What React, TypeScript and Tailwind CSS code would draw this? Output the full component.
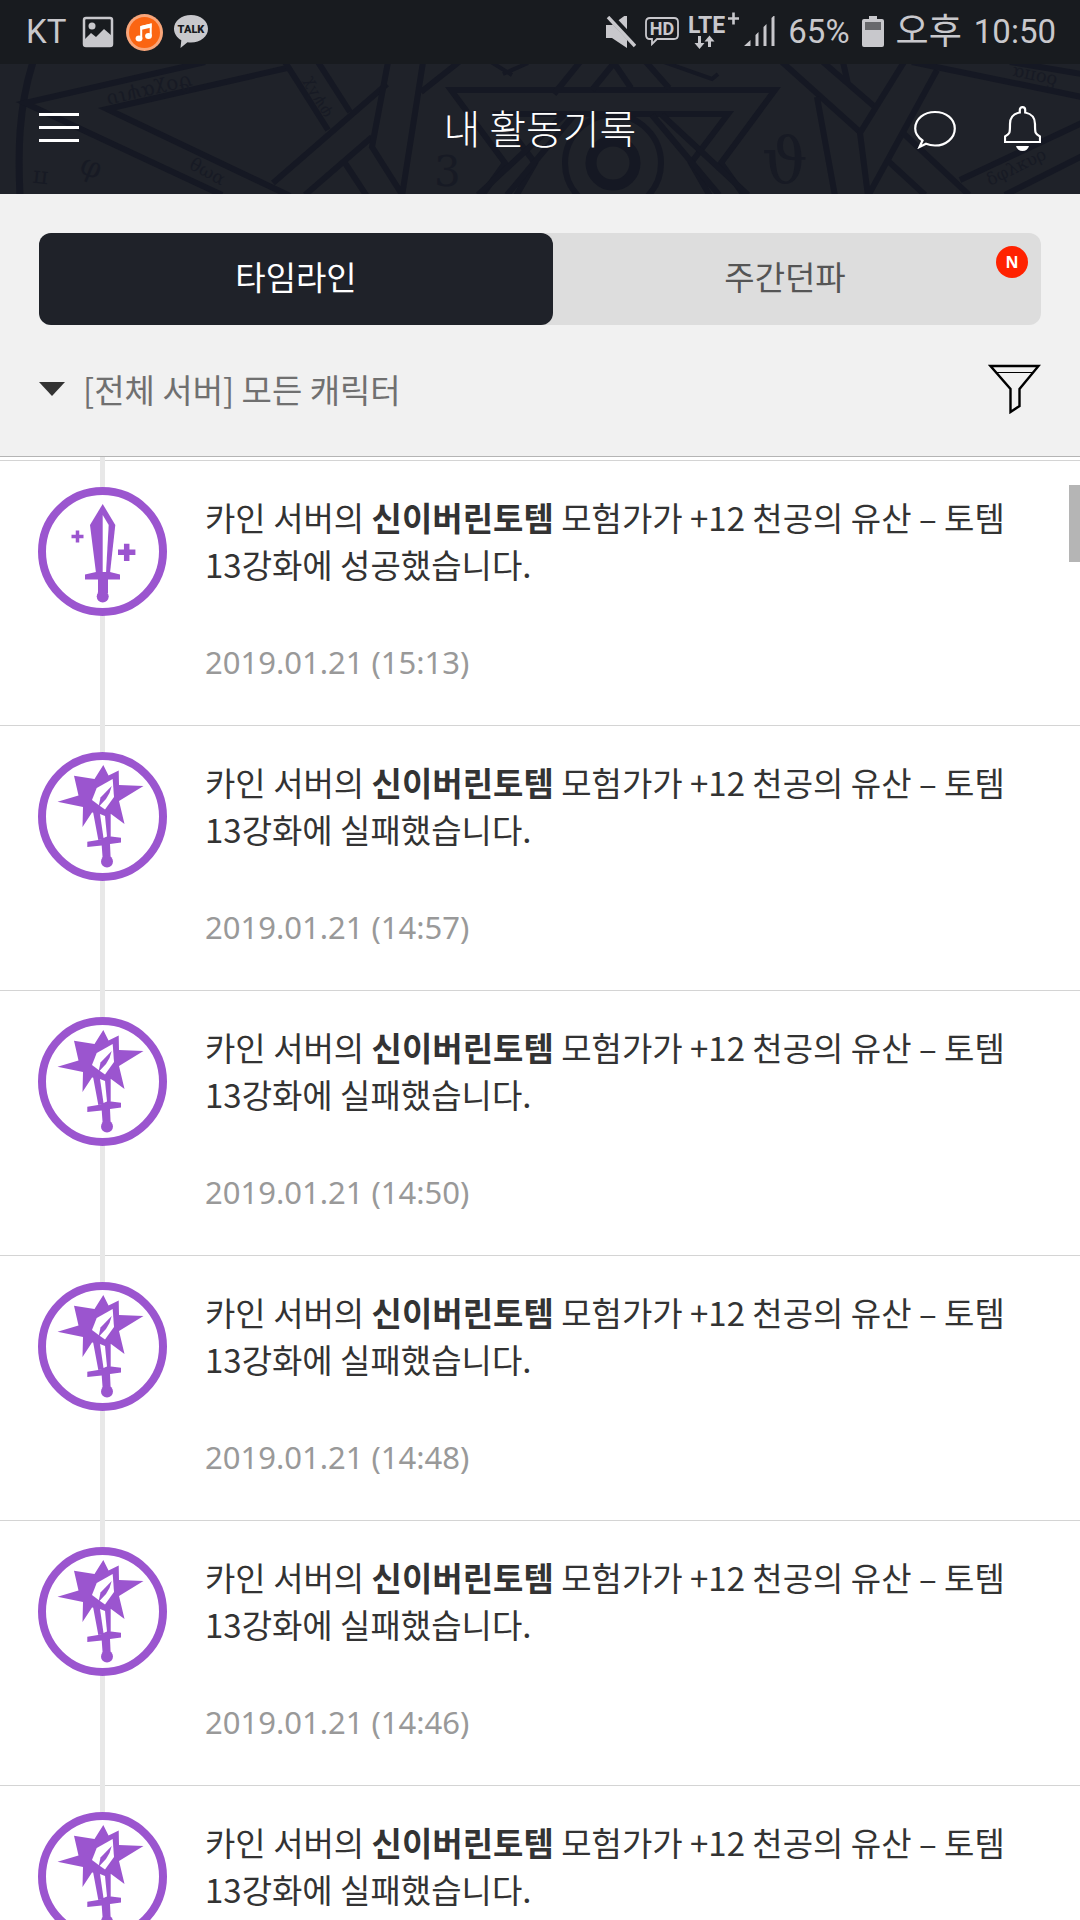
import { useState } from "react";

interface Activity {
  server: string;
  character: string;
  item: string;
  result: string;
  success: boolean;
  date: string;
}

const BASE = {
  server: "카인",
  character: "신이버린토템",
  item: "+12 천공의 유산 – 토템",
};

const ACTIVITIES: Activity[] = [
  { ...BASE, result: "13강화에 성공했습니다.", success: true, date: "2019.01.21 (15:13)" },
  { ...BASE, result: "13강화에 실패했습니다.", success: false, date: "2019.01.21 (14:57)" },
  { ...BASE, result: "13강화에 실패했습니다.", success: false, date: "2019.01.21 (14:50)" },
  { ...BASE, result: "13강화에 실패했습니다.", success: false, date: "2019.01.21 (14:48)" },
  { ...BASE, result: "13강화에 실패했습니다.", success: false, date: "2019.01.21 (14:46)" },
  { ...BASE, result: "13강화에 실패했습니다.", success: false, date: "2019.01.21 (14:44)" },
];

function StatusBar() {
  return (
    <div className="flex h-16 shrink-0 items-center justify-between bg-[#181b1f] pr-6 pl-[26px] font-['Roboto','Noto_Sans_CJK_KR',sans-serif] text-[#c8c8cc]">
      <div className="flex items-center">
        <span className="text-[33px]">KT</span>
        <svg className="ml-4 h-8 w-8" viewBox="0 0 32 32" fill="none">
          <rect x="2" y="2" width="28" height="28" rx="2" stroke="currentColor" strokeWidth="2.5" />
          <circle cx="10" cy="10" r="3.5" fill="currentColor" />
          <path d="M2 24 L9 17 L14 21 L22 13 L30 20 V30 H2 Z" fill="currentColor" />
        </svg>
        <svg className="ml-3 h-[37px] w-[37px]" viewBox="0 0 37 37">
          <circle cx="18.5" cy="18.5" r="18.5" fill="#f9a67a" />
          <circle cx="18.5" cy="18.5" r="15.5" fill="#fb6512" />
          <ellipse cx="13" cy="24.5" rx="3.4" ry="2.9" fill="#fff" />
          <ellipse cx="22.5" cy="22" rx="3.4" ry="2.9" fill="#fff" />
          <path d="M15.2 24.5 V13 L24.7 10.5 V22" fill="none" stroke="#fff" strokeWidth="2" />
          <path d="M14.5 12 L25.5 9.5 V13.5 L14.5 16 Z" fill="#fff" />
        </svg>
        <svg className="ml-[10px] h-9 w-9" viewBox="0 0 36 36">
          <path
            d="M18 1 C27.5 1 35 6.8 35 14.8 C35 22.8 27.5 28.5 18 28.5 C16.8 28.5 15.6 28.4 14.5 28.2 L7.5 34 L8.3 26.2 C3.8 23.7 1 19.6 1 14.8 C1 6.8 8.5 1 18 1 Z"
            fill="currentColor"
          />
          <text x="18" y="19" textAnchor="middle" fontSize="11" fontWeight="900" fill="#181b1f">
            TALK
          </text>
        </svg>
      </div>
      <div className="flex items-center">
        <svg className="h-8 w-[30px]" viewBox="0 0 30 32" fill="currentColor">
          <path d="M0 9 H6 L21 -2 V32 L6 22 H0 Z" />
          <path d="M1 -3 L31 29" stroke="#181b1f" strokeWidth="7" />
          <path d="M2 1 L29 30" stroke="currentColor" strokeWidth="3.5" />
        </svg>
        <svg className="ml-2 h-8 w-9" viewBox="0 0 36 32" fill="none" stroke="currentColor">
          <path
            d="M6 2 H30 Q34 2 34 6 V19 Q34 23 30 23 H13 L8 28 V23 H6 Q2 23 2 19 V6 Q2 2 6 2 Z"
            strokeWidth="1.8"
          />
          <text x="18" y="19" textAnchor="middle" fontSize="18" fontWeight="700" fill="currentColor" stroke="none">
            HD
          </text>
        </svg>
        <svg className="ml-2 h-10 w-[52px]" viewBox="0 0 52 40" fill="currentColor">
          <text x="0" y="21" fontSize="23" fontWeight="700">
            LTE
          </text>
          <path d="M40 6.5 H51 M45.5 0.5 V12.5" stroke="currentColor" strokeWidth="2.6" />
          <path d="M10 24 H13 V31 H16.5 L11.5 37 L6.5 31 H10 Z" />
          <path d="M20 35 V29.5 H16.5 L21.5 23.5 L26.5 29.5 H23 V35 Z" />
        </svg>
        <svg className="ml-1 h-8 w-8" viewBox="0 0 32 32" fill="currentColor">
          <path d="M0 30 L6.5 24 V30 Z M11.5 19 L14.5 16 V30 H11.5 Z M19.5 11 L22.5 8 V30 H19.5 Z M27.5 2 L30.5 -1 V30 H27.5 Z" />
        </svg>
        <span className="ml-3 text-[33px]">65%</span>
        <svg className="ml-3 h-8 w-[22px]" viewBox="0 0 22 32">
          <path d="M7 0 H15 V3 H20 Q22 3 22 5 V29 Q22 31 20 31 H2 Q0 31 0 29 V5 Q0 3 2 3 H7 Z" fill="currentColor" />
          <rect x="3" y="6" width="16" height="8" fill="#68696c" />
        </svg>
        <span className="ml-3 text-[36px] leading-10">오후</span>
        <span className="ml-3 text-[33px]">10:50</span>
      </div>
    </div>
  );
}

// magic circle ornament behind the app bar
function HeaderPattern() {
  return (
    <svg
      className="absolute inset-0 h-full w-full"
      viewBox="0 0 1080 130"
      preserveAspectRatio="xMidYMid slice"
      fill="none"
      aria-hidden="true"
    >
      <g stroke="#151823" strokeWidth="6">
        <path d="M33 -2 C18 45 18 90 20 132" strokeWidth="7" />
        <path d="M205 -2 L25 39 L222 131" />
        <path d="M287 4 L107 45 L290 132" />
        <path d="M285 -2 L328 66 M318 -2 L350 48" />
        <path d="M387 20 L273 119 M372 73 L305 131 M345 99 L368 134" />
        <path d="M388 -2 L372 83 L403 132 M423 -2 L402 132 M421 28 L459 -2" />
        <path d="M491 -2 L512 11 M503 10 L528 -1" strokeWidth="4" />
        <path d="M743 130 L721 99 L775 26 H451 L505 99 L483 130" />
        <path d="M710 132 L691 99 L728 50 H498 L535 99 L516 132" />
        <path d="M652 51 L719 131 M662 51 L748 131 M574 51 L507 131 M564 51 L478 131" />
        <path d="M580 -2 L554 30 M592 26 L614 -1 L631 24 M646 -2 L669 24" />
        <path d="M664 -2 L712 15 L718 10" strokeWidth="4" />
        <circle cx="613" cy="99" r="48" fill="#1f2229" />
        <circle cx="613" cy="99" r="22" strokeWidth="11" />
        <path d="M782 -2 L860 68 M823 -2 L875 43 M843 -2 L848 20" />
        <path d="M904 -2 L860 69 L868 132 M937 6 L868 132 M817 33 L835 132" />
        <path d="M912 -2 L1082 33 M1010 -2 L1082 10" />
        <path d="M903 69 L969 131 M887 96 L925 131" />
        <path d="M960 116 L1082 59 M1005 131 L1082 92" />
      </g>
      <g fill="#171a24" fontFamily="'DejaVu Serif', serif" fontSize="20">
        <text transform="translate(191 11) rotate(167)">ϑοχαψιυ</text>
        <text transform="translate(188 104) rotate(28)" fontSize="18">
          θωα
        </text>
        <text transform="translate(332 50) rotate(238)" fontSize="16">
          φψλχ
        </text>
        <text transform="translate(78 108) rotate(22)" fontSize="30">
          φ
        </text>
        <text transform="translate(49 108) rotate(186)" fontSize="24">
          π
        </text>
        <text x="434" y="122" fontSize="42">
          3
        </text>
        <text x="762" y="118" fontSize="64">
          ϑ
        </text>
        <text transform="translate(1058 12) rotate(192)" fontSize="18">
          δοπα
        </text>
        <text transform="translate(990 122) rotate(-26)" fontSize="17">
          δφλκυρ
        </text>
      </g>
    </svg>
  );
}

function AppHeader() {
  return (
    <header className="relative h-[130px] shrink-0 bg-[#1f2229] text-white">
      <HeaderPattern />
      <div className="relative grid h-full grid-cols-[1fr_auto_1fr] items-center px-[39px] pb-1">
        <button type="button" aria-label="메뉴" className="flex w-10 flex-col gap-[10px]">
          <span className="h-[3px] w-full bg-white" />
          <span className="h-[3px] w-full bg-white" />
          <span className="h-[3px] w-full bg-white" />
        </button>
        <h1 className="text-[40px] leading-[48px] font-light">내 활동기록</h1>
        <div className="flex items-center justify-end gap-12 pt-1">
          <button type="button" aria-label="메시지">
            <svg className="h-10 w-[42px]" viewBox="0 0 42 40" fill="none" stroke="currentColor" strokeWidth="2.2">
              <path d="M8.5 31.5 C3.5 28 1.2 24 1.2 19.5 C1.2 10 10 3 21 3 C32 3 40.8 10 40.8 19.5 C40.8 29 32 36.5 21 36.5 C17.5 36.5 14.5 35.8 12 34.8 L5.5 38 Z" />
            </svg>
          </button>
          <button type="button" aria-label="알림">
            <svg className="h-[46px] w-[37px]" viewBox="0 0 37 46" fill="none" stroke="currentColor" strokeWidth="2.2">
              <path d="M15.8 6.5 V4 Q15.8 1.2 18.5 1.2 Q21.2 1.2 21.2 4 V6.5 C28 8 31 11 31 18 C31 27 31 28 36 30.5 V36 H1 V30.5 C6 28 6 27 6 18 C6 11 9 8 15.8 6.5 Z" />
              <path d="M12 40 H25 Q23.5 45 18.5 45 Q13.5 45 12 40 Z" fill="currentColor" stroke="none" />
            </svg>
          </button>
        </div>
      </div>
    </header>
  );
}

function SuccessIcon() {
  return (
    <svg className="h-[129px] w-[129px]" viewBox="0 0 129 129" fill="#9b55cf">
      <circle cx="64.5" cy="64.5" r="60.5" fill="#fff" stroke="#9b55cf" strokeWidth="8" />
      <path d="M64.7 17 L52 38 L58 86 H72 L77.3 38 Z" />
      <path d="M64.7 28 L70.7 38 L68 86 H64.7 Z" fill="#fff" />
      <path d="M47 87.5 L58 85 H72 L82 87.5 V92.5 H70 V106 H60 V92.5 H47 Z" />
      <circle cx="64.7" cy="109.5" r="6" />
      <path d="M33.5 49.5 H45.5 M39.5 43.5 V55.5" stroke="#9b55cf" strokeWidth="3.5" />
      <path d="M80 65.3 H97.4 M88.7 56.8 V74" stroke="#9b55cf" strokeWidth="5.5" />
    </svg>
  );
}

function FailIcon() {
  return (
    <svg className="h-[129px] w-[129px]" viewBox="0 0 129 129" fill="#9b55cf">
      <circle cx="64.5" cy="64.5" r="60.5" fill="#fff" stroke="#9b55cf" strokeWidth="8" />
      <path d="M65.3 13 L70.5 23.5 L80.7 18.5 L81 33 L105.5 34 L81 49 L86.5 72 L73 62 L54 60.5 L44.5 75 L45 55 L19.5 49.7 L40.5 43.5 L36 23.7 L56.5 27 Z" />
      <path d="M74.7 27 L58.7 36 L54 48 L62 54 L67 57.5 L76 45 Z" fill="#fff" />
      <path d="M73.7 34 L62.5 45.5 L60.5 55 L68 47 L71.5 41 Z" />
      <path d="M54.7 58 L60.3 88 L72.7 86 V60 Z" />
      <path d="M62 62 L67 64 L69 84.5 L65.5 86 Z" fill="#fff" />
      <path d="M49.3 89.7 L60 88 L73 84.5 L83 85.7 V90.5 L72 92 L72.7 107 H64.7 L63.7 93.5 L49.3 95 Z" />
      <circle cx="69" cy="109.5" r="6" />
    </svg>
  );
}

function ActivityRow({ activity }: { activity: Activity }) {
  return (
    <li className="flex h-[265px] items-start gap-[38px] border-b border-[#d4d4d4] pt-[26px] pr-12 pl-[38px]">
      <div className="relative shrink-0">{activity.success ? <SuccessIcon /> : <FailIcon />}</div>
      <div className="pt-[7px] text-[#333]">
        <p className="text-[33px] leading-[47px]">
          {activity.server} 서버의 <strong className="font-bold">{activity.character}</strong> 모험가가{" "}
          {activity.item}
          <br />
          {activity.result}
        </p>
        <time className="mt-[54px] block font-['Noto_Sans',sans-serif] text-[31px] leading-[40px] text-[#999]">
          {activity.date}
        </time>
      </div>
    </li>
  );
}

export default function App() {
  const [tab, setTab] = useState<"timeline" | "weekly">("timeline");

  const active = "bg-[#1f2229] text-white";
  const inactive = "text-[#555]";

  return (
    <div className="flex h-screen flex-col overflow-hidden bg-white font-['Noto_Sans_CJK_KR',sans-serif]">
      <StatusBar />
      <AppHeader />

      <section className="shrink-0 border-b border-[#b4b4b4] bg-[#f1f1f1] px-[39px] pt-[39px]">
        <div role="tablist" className="flex h-[92px] rounded-xl bg-[#dddddd] text-[33px]">
          <button
            type="button"
            role="tab"
            aria-selected={tab === "timeline"}
            onClick={() => setTab("timeline")}
            className={`w-[51.3%] rounded-xl pb-1 ${tab === "timeline" ? active : inactive}`}
          >
            타임라인
          </button>
          <button
            type="button"
            role="tab"
            aria-selected={tab === "weekly"}
            onClick={() => setTab("weekly")}
            className={`relative flex-1 rounded-xl pr-6 pb-1 ${tab === "weekly" ? active : inactive}`}
          >
            주간던파
            <span className="absolute top-[13px] right-[13px] flex h-8 w-8 items-center justify-center rounded-full bg-[#ff2200] font-['Noto_Sans',sans-serif] text-base font-bold text-white">
              N
            </span>
          </button>
        </div>

        <div className="flex h-[131px] items-center justify-between pb-1">
          <div className="flex items-center gap-[18px]">
            <svg className="h-[14px] w-[26px]" viewBox="0 0 26 14" aria-hidden="true">
              <path d="M0 0 H26 L13 14 Z" fill="#333" />
            </svg>
            <select
              aria-label="캐릭터 선택"
              className="appearance-none bg-transparent text-[33px] leading-[48px] text-[#707070]"
            >
              <option>[전체 서버] 모든 캐릭터</option>
            </select>
          </div>
          <button type="button" aria-label="필터">
            <svg className="h-[50px] w-[53px]" viewBox="0 0 53 50" fill="none" stroke="#000" strokeWidth="2.4">
              <path d="M2.5 2 H50.5 L31.5 25 V42 L22.5 48 V25 Z" />
              <path d="M8 8.5 H45" strokeWidth="1" />
            </svg>
          </button>
        </div>
      </section>

      <main className="relative min-h-0 flex-1 overflow-hidden">
        <div className="absolute top-0 bottom-0 left-[100px] w-[5px] bg-[#e8e8e8]" />
        <ul className="mt-[3px] border-t border-[#d4d4d4]">
          {ACTIVITIES.map((activity) => (
            <ActivityRow key={activity.date} activity={activity} />
          ))}
        </ul>
        <div className="absolute top-7 right-0 h-[77px] w-[11px] bg-[#b5b5b5]" />
      </main>
    </div>
  );
}
